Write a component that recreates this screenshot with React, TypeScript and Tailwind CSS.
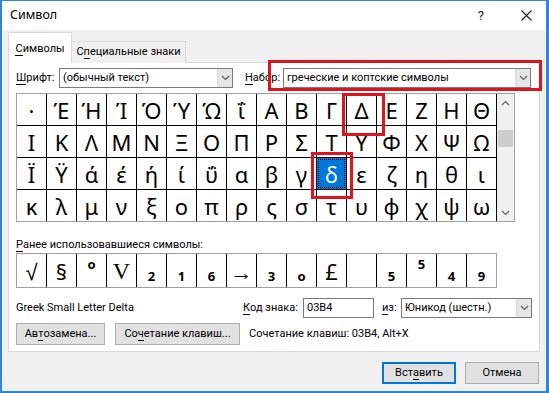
import React from 'react';

const grid: string[][] = [
  ['·', 'Έ', 'Ή', 'Ί', 'Ό', 'Ύ', 'Ώ', 'ΐ', 'Α', 'Β', 'Γ', 'Δ', 'Ε', 'Ζ', 'Η', 'Θ'],
  ['Ι', 'Κ', 'Λ', 'Μ', 'Ν', 'Ξ', 'Ο', 'Π', 'Ρ', 'Σ', 'Τ', 'Υ', 'Φ', 'Χ', 'Ψ', 'Ω'],
  ['Ϊ', 'Ϋ', 'ά', 'έ', 'ή', 'ί', 'ΰ', 'α', 'β', 'γ', 'δ', 'ε', 'ζ', 'η', 'θ', 'ι'],
  ['κ', 'λ', 'μ', 'ν', 'ξ', 'ο', 'π', 'ρ', 'ς', 'σ', 'τ', 'υ', 'φ', 'χ', 'ψ', 'ω'],
];

type Recent = { ch: string; kind: 'big' | 'serif' | 'sub' | 'sup' | 'empty' };

const recent: Recent[] = [
  { ch: '√', kind: 'big' },
  { ch: '§', kind: 'big' },
  { ch: 'o', kind: 'sup' },
  { ch: 'V', kind: 'serif' },
  { ch: '2', kind: 'sub' },
  { ch: '1', kind: 'sub' },
  { ch: '6', kind: 'sub' },
  { ch: '→', kind: 'big' },
  { ch: '3', kind: 'sub' },
  { ch: 'o', kind: 'sub' },
  { ch: '£', kind: 'big' },
  { ch: '', kind: 'empty' },
  { ch: '5', kind: 'sub' },
  { ch: '5', kind: 'sup' },
  { ch: '4', kind: 'sub' },
  { ch: '9', kind: 'sub' },
];

// mnemonic letter, underlined like in win32 dialogs
function U({ children }: { children: React.ReactNode }) {
  return <span className="border-b border-black leading-[12px] inline-block">{children}</span>;
}

function Chevron({ dir = 'down' }: { dir?: 'down' | 'up' }) {
  return (
    <svg width="9" height="6" viewBox="0 0 9 6" fill="none">
      {dir === 'down' ? (
        <path d="M1 1l3.5 3.5L8 1" stroke="#606060" strokeWidth="1.2" />
      ) : (
        <path d="M1 5l3.5-3.5L8 5" stroke="#606060" strokeWidth="1.2" />
      )}
    </svg>
  );
}

function Select({ value, w }: { value: string; w: string }) {
  return (
    <div className={`${w} h-[20px] bg-white border border-[#7a7a7a] flex items-center shrink-0`}>
      <span className="flex-1 pl-[3px] truncate whitespace-nowrap">{value}</span>
      <div className="w-[15px] h-[18px] bg-[#e6e6e6] border-l border-[#dcdcdc] flex items-center justify-center">
        <Chevron />
      </div>
    </div>
  );
}

export default function App() {
  return (
    <div
      className="w-[549px] h-[393px] bg-[#f0f0f0] border-t border-l-2 border-r-[3px] border-b-2 border-[#2f86d6] flex flex-col text-[11px] text-black relative overflow-hidden whitespace-nowrap"
      style={{ fontFamily: 'Roboto, "Noto Sans", sans-serif' }}
    >
      {/* Title bar */}
      <div className="h-[29px] bg-white flex items-center pl-[8px] shrink-0">
        <span className="text-[12.5px]" style={{ fontFamily: '"Noto Sans", sans-serif' }}>Символ</span>
        <span className="ml-auto mr-[37px] text-[13px] text-[#222]">?</span>
        <svg width="11" height="11" viewBox="0 0 11 11" className="mr-[14px]">
          <path d="M0.5 0.5l10 10M10.5 0.5l-10 10" stroke="#222" strokeWidth="1.1" />
        </svg>
      </div>

      {/* Tabs */}
      <div className="h-[33px] flex items-end pl-[6px] shrink-0 relative z-10">
        <div className="h-[31px] w-[64px] bg-white border border-b-0 border-[#d9d9d9] flex items-center justify-center pt-[2px]">
          <span><U>С</U>имволы</span>
        </div>
        <div className="h-[22px] w-[114px] bg-[#f0f0f0] border border-l-0 border-b-0 border-[#d9d9d9] flex items-center justify-center">
          <span>С<U>п</U>ециальные знаки</span>
        </div>
      </div>

      {/* Panel */}
      <div className="mx-[6px] -mt-px h-[290px] bg-white border border-[#d9d9d9] px-[7px] flex flex-col shrink-0">
        <div className="mt-[5px] h-[20px] flex items-center">
          <span className="w-[43px]"><U>Ш</U>рифт:</span>
          <Select value="(обычный текст)" w="w-[174px]" />
          <span className="ml-[12px] w-[38px]"><U>Н</U>абор:</span>
          <Select value="греческие и коптские символы" w="w-[248px]" />
        </div>

        {/* Symbol grid */}
        <div className="mt-[5px] w-[499px] border border-[#a0a0a0] flex">
          <div className="grid grid-cols-[repeat(16,29px)] auto-rows-[31px] gap-px bg-black border-r border-black">
            {grid.flatMap((row, r) =>
              row.map((ch, c) => {
                const selected = r === 2 && c === 10;
                return (
                  <div
                    key={`${r}-${c}`}
                    className={`flex items-center justify-center text-[22px] leading-none ${
                      selected ? 'bg-[#0078d7] text-white outline outline-1 outline-dotted outline-black -outline-offset-2' : 'bg-white'
                    }`}
                    style={{ fontFamily: '"Noto Sans", sans-serif' }}
                  >
                    {ch}
                  </div>
                );
              }),
            )}
          </div>
          <div className="flex-1 bg-[#f0f0f0] flex flex-col items-center">
            <div className="h-[17px] flex items-center">
              <Chevron dir="up" />
            </div>
            <div className="mt-[19px] w-[15px] h-[17px] bg-[#cdcdcd]" />
            <div className="mt-auto h-[17px] flex items-center">
              <Chevron />
            </div>
          </div>
        </div>

        <div className="mt-[15px] h-[16px] leading-[16px]">
          <U>Р</U>анее использовавшиеся символы:
        </div>

        {/* Recently used */}
        <div className="w-[481px] grid grid-cols-[repeat(16,29px)] h-[35px] gap-px bg-black border border-[#a0a0a0]">
          {recent.map((r, i) => (
            <div key={i} className="bg-white flex justify-center" style={{ fontFamily: '"Noto Sans", sans-serif' }}>
              {r.kind === 'big' && <span className="self-center text-[22px] leading-none">{r.ch}</span>}
              {r.kind === 'serif' && (
                <span className="self-center text-[24px] leading-none" style={{ fontFamily: '"Liberation Serif", serif' }}>
                  {r.ch}
                </span>
              )}
              {r.kind === 'sub' && <span className="self-end mb-[4px] text-[13px] font-bold leading-none">{r.ch}</span>}
              {r.kind === 'sup' && <span className="self-start mt-[4px] text-[13px] font-bold leading-none">{r.ch}</span>}
            </div>
          ))}
        </div>

        {/* Info row */}
        <div className="mt-[10px] h-[20px] flex items-center">
          <span className="w-[227px] shrink-0">Greek Small Letter Delta</span>
          <span className="w-[60px] shrink-0"><U>К</U>од знака:</span>
          <div className="w-[71px] h-[20px] bg-white border border-[#7a7a7a] pl-[3px] flex items-center shrink-0">03B4</div>
          <span className="ml-[8px] w-[19px] shrink-0"><U>и</U>з:</span>
          <Select value="Юникод (шестн.)" w="w-[131px]" />
        </div>

        {/* Buttons row */}
        <div className="mt-[5px] h-[22px] flex items-center">
          <div className="w-[89px] h-[22px] bg-[#e1e1e1] border border-[#adadad] flex items-center justify-center">
            <span>Ав<U>т</U>озамена...</span>
          </div>
          <div className="ml-[10px] w-[125px] h-[22px] bg-[#e1e1e1] border border-[#adadad] flex items-center justify-center">
            <span>Со<U>ч</U>етание клавиш...</span>
          </div>
          <span className="ml-[9px]">Сочетание клавиш: 03B4, Alt+X</span>
        </div>
      </div>

      {/* Bottom buttons */}
      <div className="mt-[10px] flex justify-end pr-[7px]">
        <div className="w-[74px] h-[22px] bg-[#e1e1e1] border-2 border-[#0078d7] flex items-center justify-center">
          <span>Вст<U>а</U>вить</span>
        </div>
        <div className="ml-[9px] w-[74px] h-[22px] bg-[#e1e1e1] border border-[#adadad] flex items-center justify-center">
          Отмена
        </div>
      </div>

      {/* Red annotation boxes */}
      <div className="absolute left-[266px] top-[59px] w-[274px] h-[31px] border-[3px] border-[#e0141e] pointer-events-none" />
      <div className="absolute left-[340px] top-[92px] w-[43px] h-[43px] border-[3px] border-[#e0141e] pointer-events-none" />
      <div className="absolute left-[309px] top-[151px] w-[42px] h-[47px] border-[3px] border-[#e0141e] pointer-events-none" />
    </div>
  );
}
